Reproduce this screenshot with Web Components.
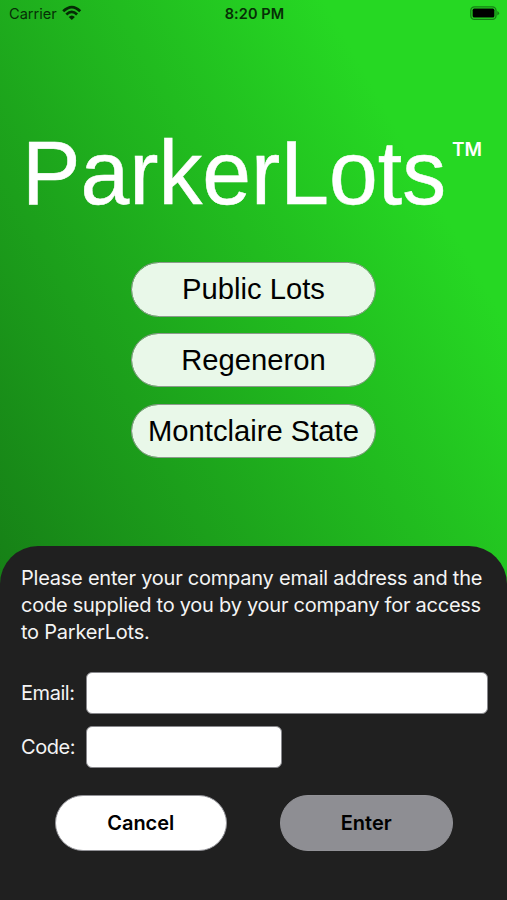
<!DOCTYPE html>
<html lang="en"><head><meta charset="utf-8"><title>ParkerLots</title>
<style>html,body{margin:0;height:100%}body{overflow:hidden}</style></head><body>
<parker-app></parker-app>
<script>
const define = (name, html) => customElements.define(name, class extends HTMLElement {
  constructor() {
    super();
    this.attachShadow({mode: 'open'}).innerHTML = html;
  }
});

define('status-bar', `
<style>
:host{display:grid;grid-template-columns:1fr auto 1fr;align-items:center;height:27px;padding:0 7px 0 9px;font:14.6px/27px Inter,sans-serif;color:#062f06}
.left{display:flex;align-items:center;gap:5px}
.left span{padding-top:1px;line-height:26px}
.left svg{margin-top:-1px}
.time{font-weight:600;font-size:14.5px;letter-spacing:.1px}
.right{display:flex;justify-content:flex-end}
svg{display:block}
</style>
<div class="left"><span>Carrier</span>
<svg width="20" height="16" viewBox="0 0 20 16"><g fill="none" stroke="#052b05" stroke-width="2.7"><path d="M1.2 6.3Q10 -2.2 18.2 6.3"/><path d="M4.3 9.5Q9.8 4.4 15.1 9.5"/></g><path d="M6.7 11.9Q9.8 8.9 12.9 11.9L9.8 15Z" fill="#052b05"/></svg></div>
<div class="time">8:20 PM</div>
<div class="right"><svg width="30" height="15" viewBox="0 0 30 15"><rect x=".8" y=".8" width="25.2" height="12.6" rx="3.6" fill="none" stroke="#167f15" stroke-width="1.3"/><rect x="2.6" y="2.6" width="21.8" height="9" rx="1.6" fill="#000"/><path d="M27.3 5v4.4q1.8-.7 1.8-2.2t-1.8-2.2z" fill="#167f15"/></svg></div>`);

define('brand-title', `
<style>
:host{display:flex;align-items:flex-start;color:#fff;white-space:nowrap}
.name{font:87.7px/100px "Liberation Sans",sans-serif;-webkit-text-stroke:.5px #fff;transform:scaleY(1.04);transform-origin:0 80px}
.tm{font:600 19px/22px Inter,sans-serif;margin:15px 0 0 6px}
</style><span class="name"><slot></slot></span><span class="tm">TM</span>`);

define('pill-button', `
<style>
:host{display:flex;align-items:center;justify-content:center;box-sizing:border-box;width:245px;height:54.5px;border-radius:28px;border:1px solid #8c9a8c;background:#e9f8e9;background-clip:padding-box;color:#000;font:29.2px/34px "Liberation Sans",sans-serif;white-space:nowrap}
:host([kind]){width:172.5px;height:56px;border-color:#929297;font:600 20px/24px Inter,sans-serif}
:host([kind=cancel]){background:#fff}
:host([kind=enter]){background:#8e8e93}
</style><slot></slot>`);

define('form-field', `
<style>
:host{display:grid;grid-template-columns:64.5px var(--field-width,402.5px);align-items:center;height:42px;letter-spacing:-.45px}
.box{box-sizing:border-box;height:42px;border:1px solid #88888c;background:#fff;border-radius:6px}
</style><span><slot></slot></span><span class="box"></span>`);

define('access-sheet', `
<style>
:host{display:flex;flex-direction:column;box-sizing:border-box;height:354px;padding:19px 19px 0 21px;background:#202020;border-radius:38px 38px 0 0;color:#f4f4f4;font:20px/27px Inter,sans-serif}
p{margin:0 0 26px;white-space:nowrap;letter-spacing:-.23px}
.l{display:block;width:max-content}
.fields{display:grid;gap:12px}
.actions{display:flex;gap:53px;margin:27px 0 0 33.5px}
</style>
<p><span class="l">Please enter your company email address and the</span><span class="l" style="letter-spacing:-.25px">code supplied to you by your company for access</span><span class="l">to ParkerLots.</span></p>
<div class="fields"><form-field>Email:</form-field><form-field style="--field-width:196px">Code:</form-field></div>
<div class="actions"><pill-button kind="cancel">Cancel</pill-button><pill-button kind="enter">Enter</pill-button></div>`);

define('parker-app', `
<style>
:host{display:flex;flex-direction:column;width:507px;height:900px;overflow:hidden;background:linear-gradient(to top right,#136813 0%,#178317 20%,#26d823 82%)}
brand-title{margin:97px 0 0 22px;height:100px}
nav{display:flex;flex-direction:column;align-items:center;gap:16.4px;margin-top:38px}
access-sheet{margin-top:auto}
</style>
<status-bar></status-bar><brand-title>ParkerLots</brand-title>
<nav><pill-button>Public Lots</pill-button><pill-button>Regeneron</pill-button><pill-button>Montclaire State</pill-button></nav>
<access-sheet></access-sheet>`);
</script></body></html>
